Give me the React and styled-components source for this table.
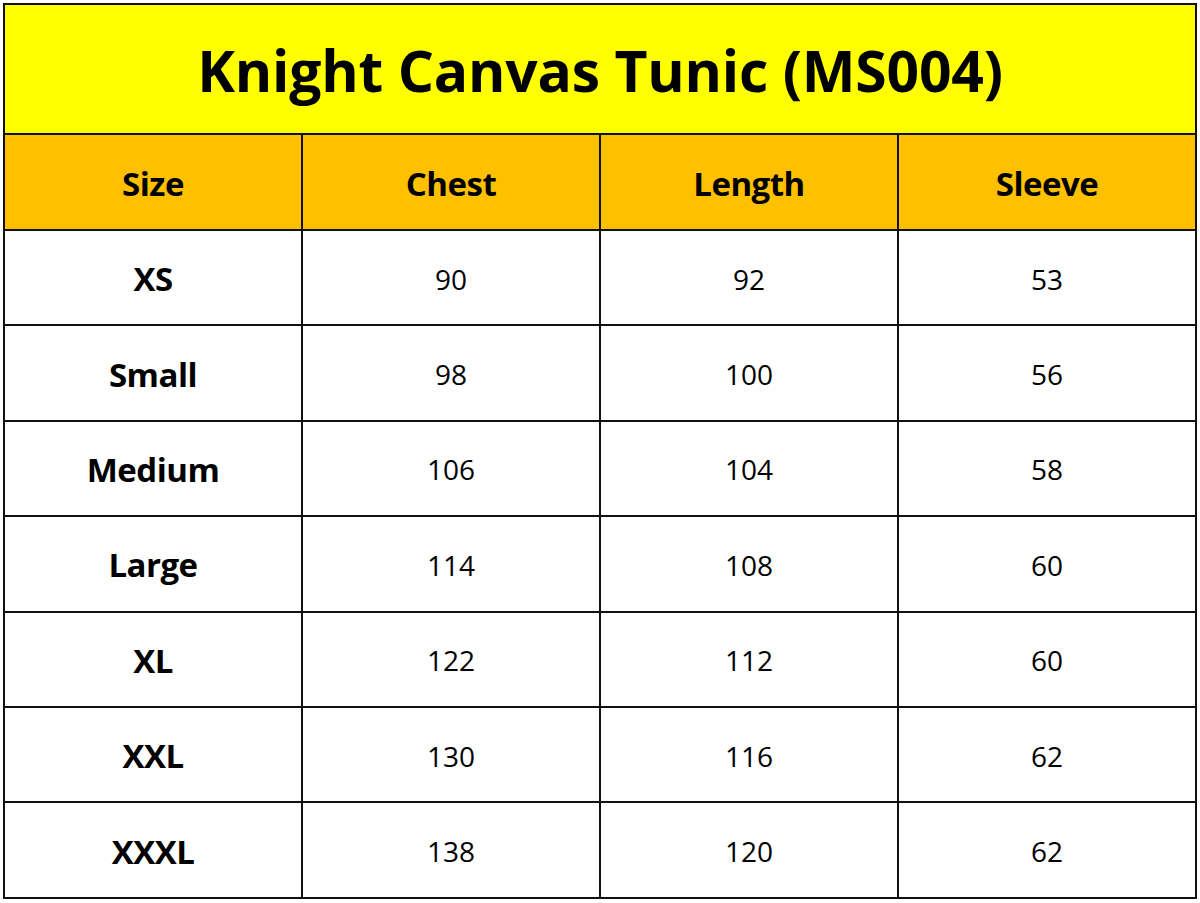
import React from 'react';
import styled, { createGlobalStyle } from 'styled-components';

const GlobalStyle = createGlobalStyle`
  html, body {
    margin: 0;
    padding: 0;
    background: #ffffff;
  }
  body {
    font-family: "Open Sans", "Liberation Sans", sans-serif;
    color: #000;
  }
`;

const Page = styled.div`
  width: 1200px;
  height: 903px;
  padding: 3px 0 0 3px;
  box-sizing: border-box;
`;

const Table = styled.div`
  width: 1194px;
  display: grid;
  grid-template-columns: repeat(4, 298px);
  grid-template-rows: 130px 96px repeat(7, 95.4px);
  border-left: 2px solid #111;
  border-top: 2px solid #111;
  box-sizing: border-box;
`;

const Cell = styled.div`
  display: flex;
  align-items: center;
  justify-content: center;
  border-right: 2px solid #111;
  border-bottom: 2px solid #111;
  box-sizing: border-box;
  background: ${p => p.$bg || '#ffffff'};
  font-size: ${p => (p.$bold ? '33px' : '28px')};
  font-weight: ${p => (p.$bold ? 700 : 400)};
  letter-spacing: ${p => (p.$bold ? '-0.5px' : '0')};
  padding-top: 2px;
`;

const Title = styled(Cell)`
  grid-column: 1 / span 4;
  background: #ffff00;
  font-size: 57px;
  font-weight: 700;
  letter-spacing: -0.2px;
  padding-top: 2px;
`;

const headers = ['Size', 'Chest', 'Length', 'Sleeve'];

const rows = [
  ['XS', 90, 92, 53],
  ['Small', 98, 100, 56],
  ['Medium', 106, 104, 58],
  ['Large', 114, 108, 60],
  ['XL', 122, 112, 60],
  ['XXL', 130, 116, 62],
  ['XXXL', 138, 120, 62],
];

export default function App() {
  return (
    <>
      <GlobalStyle />
      <Page>
        <Table>
          <Title>Knight Canvas Tunic (MS004)</Title>
          {headers.map(h => (
            <Cell key={h} $bg="#ffc000" $bold>{h}</Cell>
          ))}
          {rows.map(row =>
            row.map((val, i) => (
              <Cell key={row[0] + i} $bold={i === 0}>{val}</Cell>
            ))
          )}
        </Table>
      </Page>
    </>
  );
}
